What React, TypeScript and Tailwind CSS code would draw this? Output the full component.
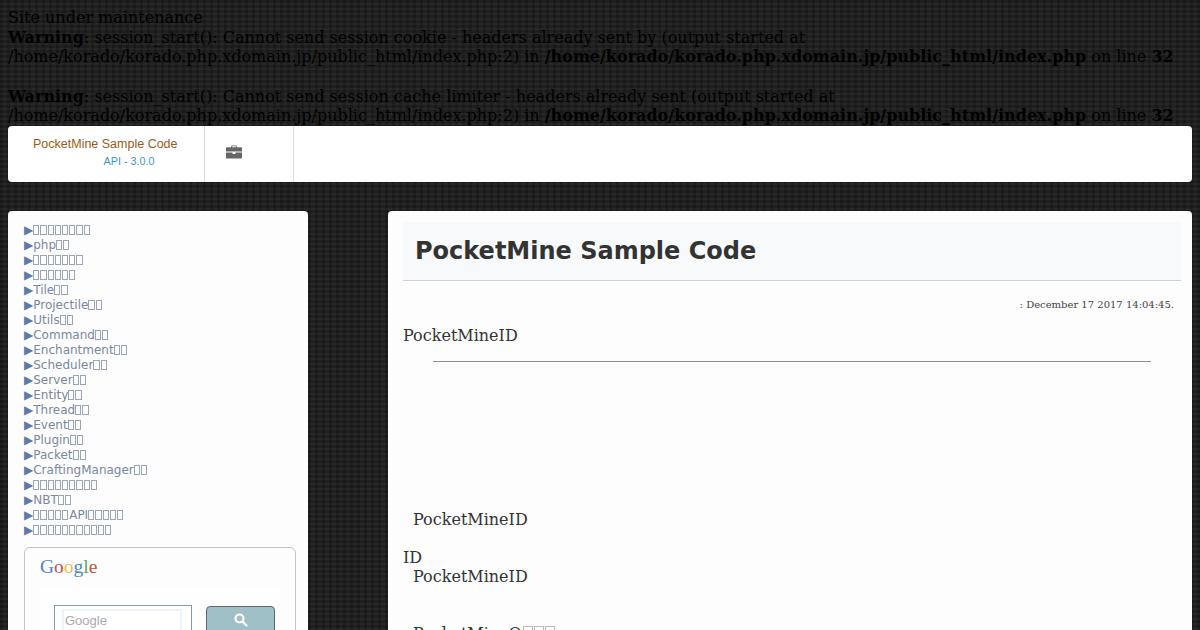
// each entry: label before the missing-glyph boxes, box count, optional label and boxes after
const menu: [string, number, string?, number?][] = [
  ["", 8],
  ["php", 2],
  ["", 7],
  ["", 6],
  ["Tile", 2],
  ["Projectile", 2],
  ["Utils", 2],
  ["Command", 2],
  ["Enchantment", 2],
  ["Scheduler", 2],
  ["Server", 2],
  ["Entity", 2],
  ["Thread", 2],
  ["Event", 2],
  ["Plugin", 2],
  ["Packet", 2],
  ["CraftingManager", 2],
  ["", 9],
  ["NBT", 2],
  ["", 5, "API", 5],
  ["", 11],
];

const texture =
  "bg-[#212121] bg-[repeating-linear-gradient(0deg,rgba(255,255,255,0.018)_0px,rgba(255,255,255,0.018)_2px,rgba(0,0,0,0.12)_2px,rgba(0,0,0,0.12)_5px),repeating-linear-gradient(90deg,rgba(0,0,0,0.14)_0px,rgba(0,0,0,0.14)_3px,rgba(255,255,255,0.012)_3px,rgba(255,255,255,0.012)_7px)]";

// the page's Japanese text came out as missing-glyph boxes
function Boxes({ n }: { n: number }) {
  return (
    <>
      {Array.from({ length: n }, (_, i) => (
        <span
          key={i}
          className="mr-[1px] inline-block h-[10px] w-[6.2px] border border-[#9aa5b8] align-[-1px]"
        />
      ))}
    </>
  );
}

export default function App() {
  return (
    <div className={`h-[630px] overflow-hidden p-2 font-['DejaVu_Serif',serif] text-[16px] leading-[19.67px] text-black ${texture}`}>
      <div>
        Site under maintenance
        <br />
        <b>Warning</b>: session_start(): Cannot send session cookie - headers already sent by (output started at
        <br />
        /home/korado/korado.php.xdomain.jp/public_html/index.php:2) in{" "}
        <b>/home/korado/korado.php.xdomain.jp/public_html/index.php</b> on line <b>32</b>
        <br />
        <br />
        <b>Warning</b>: session_start(): Cannot send session cache limiter - headers already sent (output started at
        <br />
        /home/korado/korado.php.xdomain.jp/public_html/index.php:2) in{" "}
        <b>/home/korado/korado.php.xdomain.jp/public_html/index.php</b> on line <b>32</b>
      </div>

      <header className="flex h-14 rounded-sm bg-white font-['Liberation_Sans',sans-serif]">
        <div className="flex w-[197px] flex-col border-r border-[#dddddd] pl-[25px] pt-[11px]">
          <span className="text-[12.5px] leading-[15px] text-[#9c5a20]">PocketMine Sample Code</span>
          <span className="ml-[70.5px] mt-[3px] text-[10.8px] leading-[13px] text-[#3a96c8]">API - 3.0.0</span>
        </div>
        <div className="flex w-[89px] items-center border-r border-[#dddddd] pl-[21px]">
          <svg width="16" height="14" viewBox="0 0 17 14" className="mb-[4px] fill-[#666666]">
            <path d="M5.5 2V1a1 1 0 0 1 1-1h4a1 1 0 0 1 1 1v1H16a1 1 0 0 1 1 1v3.5H0V3a1 1 0 0 1 1-1h4.5Zm1 0h4V1h-4v1Z" />
            <path d="M0 7.5h7V9h3V7.5h7V13a1 1 0 0 1-1 1H1a1 1 0 0 1-1-1V7.5Z" />
          </svg>
        </div>
      </header>

      <div className="mt-[29px] flex gap-[80px]">
        <aside className="h-[430px] w-[300px] shrink-0 rounded bg-[#fdfdfe] pl-4 pr-3 pt-[12px]">
          <ul className="font-['DejaVu_Sans',sans-serif] text-[12px] leading-[15px] text-[#7a879f]">
            {menu.map(([label, n, after, m], i) => (
              <li key={i}>
                <span className="text-[#5f7aa8]">▶</span>
                {label}
                <Boxes n={n} />
                {after}
                {m ? <Boxes n={m} /> : null}
              </li>
            ))}
          </ul>
          <div className="mt-[9px] h-[120px] rounded-md border border-[#c4c4c4] px-[15px] pt-[9px]">
            <div className="font-['Liberation_Serif',serif] text-[19.5px] leading-[20px]">
              <span className="text-[#4a86c8]">G</span>
              <span className="text-[#c8503c]">o</span>
              <span className="text-[#e0c050]">o</span>
              <span className="text-[#4a86c8]">g</span>
              <span className="text-[#58a868]">l</span>
              <span className="text-[#c8503c]">e</span>
            </div>
            <div className="mt-[10px] flex gap-[14px] bg-[#fefefe] pl-[14px] pt-[18px]">
              <div className="h-[40px] w-[138px] border border-[#7f9fb0] pl-[7px] pr-[9px] pt-[3px]">
                <div className="h-[30px] border-2 border-[#eef3f9] bg-white pl-[1px] font-['Liberation_Sans',sans-serif] text-[13px] leading-[20px] text-[#aaaaaa]">
                  Google
                </div>
              </div>
              <div className="mt-[1px] flex h-[40px] w-[69px] justify-center rounded-sm border border-[#666666] bg-[#a0c0c8] pt-[6px]">
                <svg width="14" height="14" viewBox="0 0 14 14" fill="none" stroke="white" strokeWidth="2.2">
                  <circle cx="5.5" cy="5.5" r="4" />
                  <path d="M8.5 8.5 13 13" />
                </svg>
              </div>
            </div>
          </div>
        </aside>

        <main className="min-w-0 flex-1 rounded bg-[#fdfdfe] pl-[15px] pr-[11px] pt-[11px] text-[#333333]">
          <div className="h-[59px] border-b border-[#ccd0dc] bg-[#f8f9fb] pl-3 pt-[15px] font-['DejaVu_Sans',sans-serif] text-[24px] font-bold leading-[28px]">
            PocketMine Sample Code
          </div>
          <div className="mt-[17px] pr-[7px] text-right text-[10px] leading-[14px] text-[#444444]">
            : December 17 2017 14:04:45.
          </div>
          <p className="mt-[14px] leading-[20px]">PocketMineID</p>
          <hr className="mx-[30px] mt-[15px] border-t border-[#8f8f8f]" />
          <p className="ml-[10px] mt-[148px] leading-[20px]">PocketMineID</p>
          <p className="mt-[18px] leading-[20px]">ID</p>
          <p className="-mt-px ml-[10px] leading-[19px]">PocketMineID</p>
          <p className="ml-[10px] mt-[38px] leading-[20px]">
            PocketMineO
            <span className="ml-[1px] inline-block h-[13px] w-[10px] border border-[#bbbbbb]" />
            <span className="ml-[1px] inline-block h-[13px] w-[10px] border border-[#bbbbbb]" />
            <span className="ml-[1px] inline-block h-[13px] w-[10px] border border-[#bbbbbb]" />
          </p>
        </main>
      </div>
    </div>
  );
}
